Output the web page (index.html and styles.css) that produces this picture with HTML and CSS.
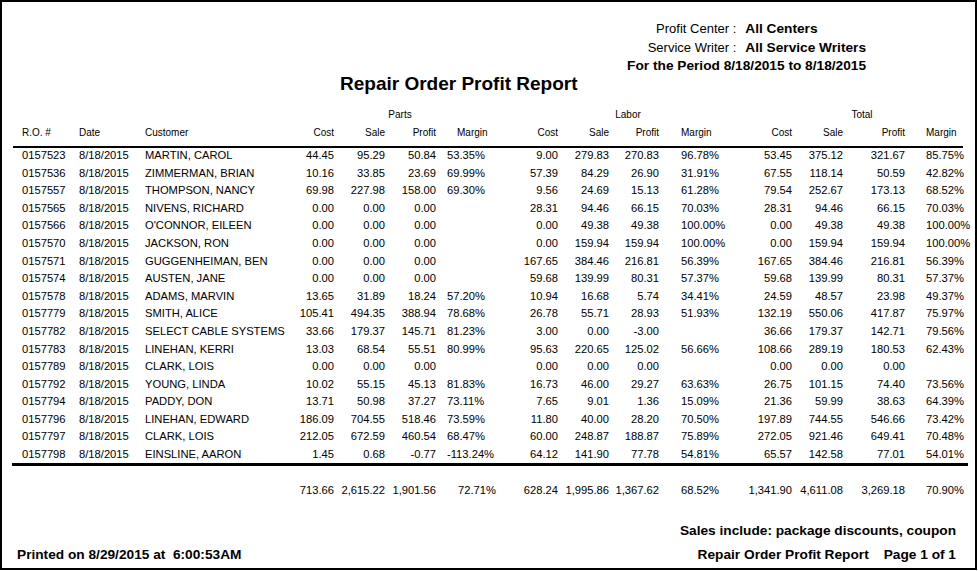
FILE: index.html
```html
<!DOCTYPE html>
<html>
<head>
<meta charset="utf-8">
<title>Repair Order Profit Report</title>
<link rel="stylesheet" href="styles.css">
</head>
<body>
<div class="page">
  <div class="info-wrap">
    <div class="info">
      <span class="lbl">Profit Center :</span><span class="val">All Centers</span>
      <span class="lbl">Service Writer :</span><span class="val">All Service Writers</span>
      <span class="period">For the Period 8/18/2015 to 8/18/2015</span>
    </div>
  </div>
  <h1 class="title">Repair Order Profit Report</h1>

  <div class="table">
    <div class="thead">
      <div class="grid groups">
        <span class="g-parts">Parts</span>
        <span class="g-labor">Labor</span>
        <span class="g-total">Total</span>
      </div>
      <div class="grid cols">
        <span>R.O. #</span><span>Date</span><span>Customer</span>
        <span class="n">Cost</span><span class="n">Sale</span><span class="n">Profit</span><span class="m hp">Margin</span>
        <span class="n">Cost</span><span class="n">Sale</span><span class="n">Profit</span><span class="m lm">Margin</span>
        <span class="n">Cost</span><span class="n">Sale</span><span class="n">Profit</span><span class="m tm">Margin</span>
      </div>
    </div>
    <div class="tbody" id="tbody"></div>
  </div>

  <div class="rule"></div>

  <div class="grid totals">
    <span></span><span></span><span></span>
    <span class="n">713.66</span><span class="n">2,615.22</span><span class="n">1,901.56</span><span class="m tp">72.71%</span>
    <span class="n">628.24</span><span class="n">1,995.86</span><span class="n">1,367.62</span><span class="m lm">68.52%</span>
    <span class="n">1,341.90</span><span class="n">4,611.08</span><span class="n">3,269.18</span><span class="m tm">70.90%</span>
  </div>

  <div class="note">Sales include: package discounts, coupon</div>
  <div class="footer">
    <span class="printed">Printed on 8/29/2015 at  6:00:53AM</span>
    <span class="pageinfo"><span>Repair Order Profit Report</span><span>Page 1 of 1</span></span>
  </div>
</div>
<script src="script.js"></script>
</body>
</html>
```
FILE: script.js
```js
var rows = [
["0157523","MARTIN, CAROL","44.45","95.29","50.84","53.35%","9.00","279.83","270.83","96.78%","53.45","375.12","321.67","85.75%"],
["0157536","ZIMMERMAN, BRIAN","10.16","33.85","23.69","69.99%","57.39","84.29","26.90","31.91%","67.55","118.14","50.59","42.82%"],
["0157557","THOMPSON, NANCY","69.98","227.98","158.00","69.30%","9.56","24.69","15.13","61.28%","79.54","252.67","173.13","68.52%"],
["0157565","NIVENS, RICHARD","0.00","0.00","0.00","","28.31","94.46","66.15","70.03%","28.31","94.46","66.15","70.03%"],
["0157566","O'CONNOR, EILEEN","0.00","0.00","0.00","","0.00","49.38","49.38","100.00%","0.00","49.38","49.38","100.00%"],
["0157570","JACKSON, RON","0.00","0.00","0.00","","0.00","159.94","159.94","100.00%","0.00","159.94","159.94","100.00%"],
["0157571","GUGGENHEIMAN, BEN","0.00","0.00","0.00","","167.65","384.46","216.81","56.39%","167.65","384.46","216.81","56.39%"],
["0157574","AUSTEN, JANE","0.00","0.00","0.00","","59.68","139.99","80.31","57.37%","59.68","139.99","80.31","57.37%"],
["0157578","ADAMS, MARVIN","13.65","31.89","18.24","57.20%","10.94","16.68","5.74","34.41%","24.59","48.57","23.98","49.37%"],
["0157779","SMITH, ALICE","105.41","494.35","388.94","78.68%","26.78","55.71","28.93","51.93%","132.19","550.06","417.87","75.97%"],
["0157782","SELECT CABLE SYSTEMS","33.66","179.37","145.71","81.23%","3.00","0.00","-3.00","","36.66","179.37","142.71","79.56%"],
["0157783","LINEHAN, KERRI","13.03","68.54","55.51","80.99%","95.63","220.65","125.02","56.66%","108.66","289.19","180.53","62.43%"],
["0157789","CLARK, LOIS","0.00","0.00","0.00","","0.00","0.00","0.00","","0.00","0.00","0.00",""],
["0157792","YOUNG, LINDA","10.02","55.15","45.13","81.83%","16.73","46.00","29.27","63.63%","26.75","101.15","74.40","73.56%"],
["0157794","PADDY, DON","13.71","50.98","37.27","73.11%","7.65","9.01","1.36","15.09%","21.36","59.99","38.63","64.39%"],
["0157796","LINEHAN, EDWARD","186.09","704.55","518.46","73.59%","11.80","40.00","28.20","70.50%","197.89","744.55","546.66","73.42%"],
["0157797","CLARK, LOIS","212.05","672.59","460.54","68.47%","60.00","248.87","188.87","75.89%","272.05","921.46","649.41","70.48%"],
["0157798","EINSLINE, AARON","1.45","0.68","-0.77","-113.24%","64.12","141.90","77.78","54.81%","65.57","142.58","77.01","54.01%"]
];
var body = document.getElementById("tbody");
var marginCls = {5: "m pm", 9: "m lm", 13: "m tm"};
rows.forEach(function (r) {
  var row = document.createElement("div");
  row.className = "grid row";
  var cells = [r[0], "8/18/2015", r[1]].concat(r.slice(2));
  cells.forEach(function (v, i) {
    var s = document.createElement("span");
    if (i >= 3) {
      s.className = marginCls[i - 1] || "n";
    }
    s.textContent = v;
    row.appendChild(s);
  });
  body.appendChild(row);
});
```
FILE: styles.css
```css
* { box-sizing: border-box; }
html, body { margin: 0; padding: 0; background: #fff; }
body {
  font-family: "Liberation Sans", Arial, sans-serif;
  color: #000;
}
.page {
  width: 977px;
  height: 570px;
  border: 2px solid #000;
  overflow: hidden;
  display: flex;
  flex-direction: column;
}
.info-wrap {
  display: flex;
  justify-content: flex-end;
  padding-right: 109px;
  margin-top: 18px;
}
.info {
  display: grid;
  grid-template-columns: 1fr auto;
  column-gap: 9px;
  font-size: 13px;
  line-height: 18.5px;
}
.lbl { text-align: right; white-space: nowrap; }
.val { font-weight: bold; white-space: nowrap; font-size: 13.7px; }
.period { grid-column: 1 / 3; text-align: right; font-weight: bold; white-space: nowrap; font-size: 13.7px; }
.title {
  margin: 0;
  padding-left: 338px;
  font-size: 19px;
  line-height: 15px;
  font-weight: bold;
}
.table {
  margin-left: 11px;
  width: 950px;
}
.thead {
  margin-top: 17.5px;
  padding-left: 9px;
  padding-bottom: 6.2px;
  border-bottom: 2px solid #000;
  font-size: 10px;
  line-height: 14px;
}
.grid {
  display: grid;
  grid-template-columns: 57px 66px 145px 44px 51px 51px 84px 38px 51px 50px 80px 53px 51px 62px 1fr;
  white-space: nowrap;
}
.cols { margin-top: 3.8px; }
.g-parts { grid-column: 4 / 8; text-align: center; padding-right: 10px; }
.g-labor { grid-column: 8 / 12; text-align: center; padding-right: 3px; }
.g-total { grid-column: 12 / 16; text-align: center; padding-left: 22px; }
.n { text-align: right; }
.m { text-align: left; }
.pm { padding-left: 11px; }
.hp { padding-left: 21px; }
.tp { padding-left: 22px; }
.lm { padding-left: 22px; }
.tm { padding-left: 21px; }
.tbody {
  padding-left: 9px;
  display: flex;
  flex-direction: column;
  gap: 3.6px;
  font-size: 11.2px;
  line-height: 14px;
}
.rule {
  margin-top: 2.3px;
  margin-left: 10px;
  width: 956px;
  height: 3px;
  background: #000;
  flex: none;
}
.totals {
  margin-top: 16.2px;
  margin-left: 11px;
  padding-left: 9px;
  width: 950px;
  font-size: 11.2px;
  line-height: 14px;
}
.note {
  margin-top: 25.3px;
  text-align: right;
  padding-right: 19px;
  font-size: 13.7px;
  font-weight: bold;
  line-height: 18.5px;
}
.footer {
  margin-top: 5.5px;
  display: flex;
  justify-content: space-between;
  padding-left: 15px;
  padding-right: 19px;
  font-size: 13.7px;
  font-weight: bold;
  line-height: 18.5px;
}
.printed { white-space: pre; }
.pageinfo { display: flex; gap: 15px; }
```
